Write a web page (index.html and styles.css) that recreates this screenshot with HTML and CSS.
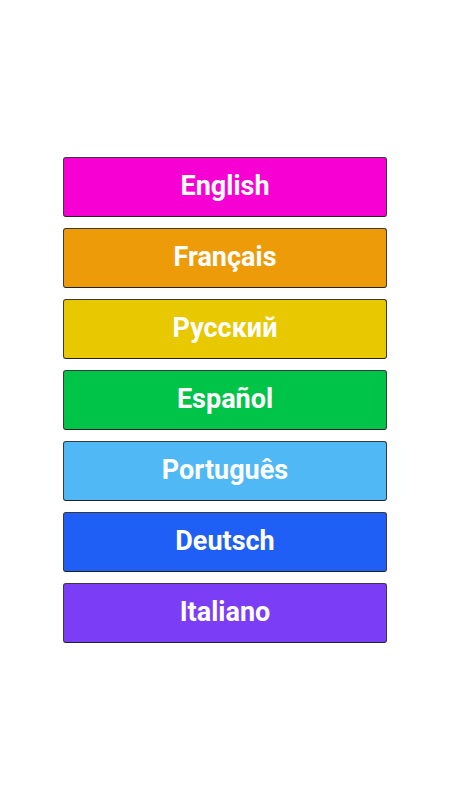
FILE: index.html
```html
<!DOCTYPE html>
<html>
<head>
<meta charset="utf-8">
<link rel="stylesheet" href="styles.css">
</head>
<body>
<main class="screen">
  <div class="list">
    <button class="lang en">English</button>
    <button class="lang fr">Français</button>
    <button class="lang ru">Русский</button>
    <button class="lang es">Español</button>
    <button class="lang pt">Português</button>
    <button class="lang de">Deutsch</button>
    <button class="lang it">Italiano</button>
  </div>
</main>
</body>
</html>
```
FILE: styles.css
```css
html, body {
  margin: 0;
  padding: 0;
  background: #ffffff;
}
.screen {
  width: 450px;
  height: 800px;
  display: flex;
  align-items: center;
  justify-content: center;
}
.list {
  display: flex;
  flex-direction: column;
  gap: 11px;
  width: 324px;
  margin-bottom: 1px;
}
.lang {
  box-sizing: border-box;
  height: 60px;
  width: 100%;
  border: 1px solid #3a3a3a;
  border-bottom-color: #222;
  border-radius: 3px;
  color: #ffffff;
  font-family: Roboto, "Liberation Sans", sans-serif;
  font-weight: 700;
  font-size: 27px;
  padding: 0 0 2px 0;
  display: flex;
  align-items: center;
  justify-content: center;
}
.en { background: #f700d3; }
.fr { background: #ee9b0a; }
.ru { background: #e8c800; }
.es { background: #00c447; }
.pt { background: #50b8f5; }
.de { background: #1f5ff5; }
.it { background: #7b3df5; }
```
